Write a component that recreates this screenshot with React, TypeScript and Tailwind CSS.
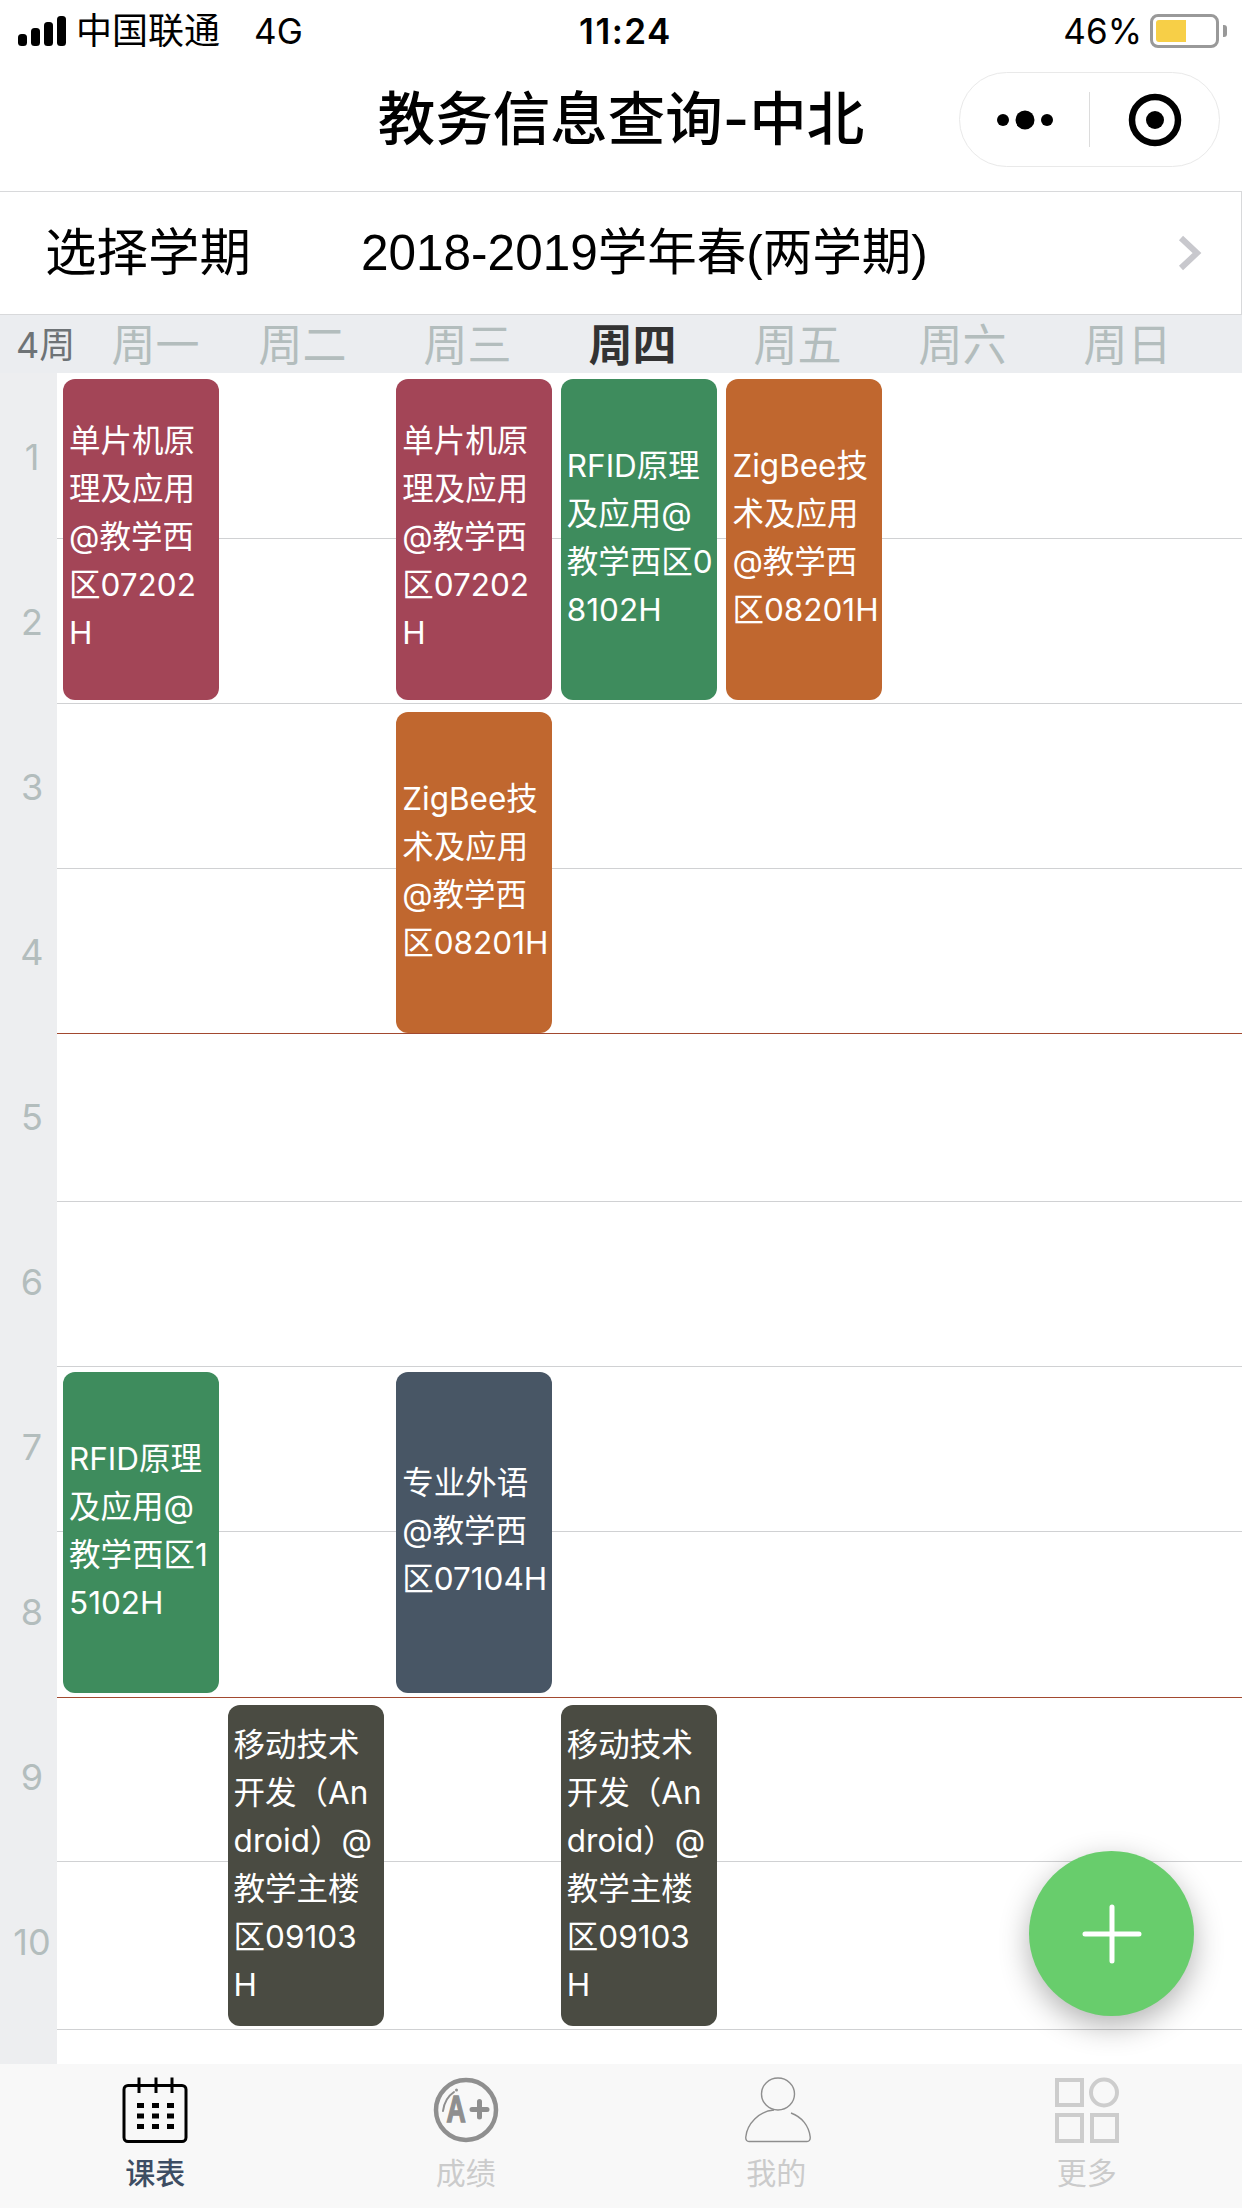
const tracks = [
  { n: 1, line: 'row-start-1 border-[#d0d1d3]' },
  { n: 2, line: 'row-start-2 border-[#d0d1d3]' },
  { n: 3, line: 'row-start-3 border-[#d0d1d3]' },
  { n: 4, line: 'row-start-4 border-[#a2492f]' },
  { n: 5, line: 'row-start-5 border-[#d0d1d3]' },
  { n: 6, line: 'row-start-6 border-[#d0d1d3]' },
  { n: 7, line: 'row-start-7 border-[#d0d1d3]' },
  { n: 8, line: 'row-start-8 border-[#a2492f]' },
  { n: 9, line: 'row-start-9 border-[#d0d1d3]' },
  { n: 10, line: 'row-start-10 border-[#d0d1d3]' },
]

const maroon = 'bg-[#a34557]'
const orange = 'bg-[#c0672f]'
const green = 'bg-[#3e8c5d]'
const slate = 'bg-[#485665]'
const dark = 'bg-[#4a4b42]'

const courses = [
  { place: 'col-start-1 row-start-1 mt-[6px] ml-[6px] pb-[5px]', color: maroon, lines: ['单片机原', '理及应用', '@教学西', '区07202', 'H'] },
  { place: 'col-start-3 row-start-1 mt-[6px] ml-[8px] pb-[5px]', color: maroon, lines: ['单片机原', '理及应用', '@教学西', '区07202', 'H'] },
  { place: 'col-start-4 row-start-1 mt-[6px] ml-[7px] pb-[4px]', color: green, lines: ['RFID原理', '及应用@', '教学西区0', '8102H'] },
  { place: 'col-start-5 row-start-1 mt-[6px] ml-[7px] pb-[4px]', color: orange, lines: ['ZigBee技', '术及应用', '@教学西', '区08201H'] },
  { place: 'col-start-3 row-start-3 mt-[9px] ml-[8px] pb-[4px]', color: orange, lines: ['ZigBee技', '术及应用', '@教学西', '区08201H'] },
  { place: 'col-start-1 row-start-7 mt-[6px] ml-[6px] pb-[4px]', color: green, lines: ['RFID原理', '及应用@', '教学西区1', '5102H'] },
  { place: 'col-start-3 row-start-7 mt-[6px] ml-[8px] pb-[4px]', color: slate, lines: ['专业外语', '@教学西', '区07104H'] },
  { place: 'col-start-2 row-start-9 mt-[8px] ml-[5px] pb-[2px]', color: dark, lines: ['移动技术', '开发（An', 'droid）@', '教学主楼', '区09103', 'H'] },
  { place: 'col-start-4 row-start-9 mt-[8px] ml-[7px] pb-[2px]', color: dark, lines: ['移动技术', '开发（An', 'droid）@', '教学主楼', '区09103', 'H'] },
]

const days = [
  { label: '周二', active: false },
  { label: '周三', active: false },
  { label: '周四', active: true },
  { label: '周五', active: false },
  { label: '周六', active: false },
  { label: '周日', active: false },
]

function StatusBar() {
  return (
    <div className="h-[60px] grid grid-cols-3 items-center pl-[18px] pr-[15px] pt-[2px] text-black">
      <div className="flex items-center">
        <svg width="48" height="30" viewBox="0 0 48 30" fill="#000">
          <rect x="0" y="18" width="9" height="12" rx="3.5" />
          <rect x="13" y="12" width="9" height="18" rx="3.5" />
          <rect x="26" y="6" width="9" height="24" rx="3.5" />
          <rect x="39" y="0" width="9" height="30" rx="3.5" />
        </svg>
        <span className="ml-[10px] text-[36px] leading-none">中国联通</span>
        <span className="ml-[34px] text-[35px] leading-none">4G</span>
      </div>
      <div className="text-center text-[35px] font-semibold tracking-[1.5px] leading-none pl-[6px]">11:24</div>
      <div className="flex items-center justify-end">
        <span className="text-[35px] leading-none mr-[8px]">46%</span>
        <div className="w-[69px] h-[34px] border-[3px] border-[#999999] rounded-[8px] p-[3px]">
          <div className="w-[30px] h-[22px] bg-[#f7cf47] rounded-l-[3px]" />
        </div>
        <div className="w-[4px] h-[12px] bg-[#999999] rounded-r-[3px] ml-[4px]" />
      </div>
    </div>
  )
}

function NavBar() {
  return (
    <div className="h-[132px] grid grid-cols-[1fr_auto_1fr] items-center pb-[12px] border-b border-[#d8d9db]">
      <div />
      <div className="text-[57.5px] font-medium leading-none text-black">教务信息查询-中北</div>
      <div className="flex justify-end pr-[22px]">
        <div className="w-[261px] h-[95px] rounded-full border border-[#e9e9e9] flex items-center">
          <div className="w-[129px] flex justify-center">
            <svg width="60" height="24" viewBox="0 0 60 24" fill="#000">
              <circle cx="8" cy="12" r="6" />
              <circle cx="30" cy="12" r="9.5" />
              <circle cx="52" cy="12" r="6" />
            </svg>
          </div>
          <div className="w-px h-[55px] bg-[#dcdcdc]" />
          <div className="flex-1 flex justify-center">
            <svg width="54" height="54" viewBox="0 0 54 54">
              <circle cx="27" cy="27" r="23" fill="none" stroke="#000" strokeWidth="6.5" />
              <circle cx="27" cy="27" r="9" fill="#000" />
            </svg>
          </div>
        </div>
      </div>
    </div>
  )
}

function TermPicker() {
  return (
    <div className="h-[123px] flex items-center pl-[45px] border-b border-r border-[#d8d9db] text-black">
      <span className="w-[316px] text-[51.5px] leading-none">选择学期</span>
      <span className="text-[49.5px] leading-none font-['Liberation_Sans','Noto_Sans_CJK_SC',sans-serif]">2018-2019学年春(两学期)</span>
      <svg className="ml-auto mr-[39px]" width="24" height="36" viewBox="0 0 24 36" fill="none">
        <path d="M3 3 L19 18 L3 33" stroke="#c8c8cd" strokeWidth="6" />
      </svg>
    </div>
  )
}

function WeekHeader() {
  return (
    <div className="h-[58px] flex items-center pt-[1px] bg-[#ebedf0] text-[44px] leading-none text-[#b3bdbd]">
      <span className="w-[57px] pl-[16px] text-[36px] whitespace-nowrap text-[#6e7376]">4周</span>
      <span className="w-[163px] text-center pl-[34px]">周一</span>
      {days.map((d) => (
        <span key={d.label} className={d.active ? 'w-[165px] text-center font-bold text-[#333333]' : 'w-[165px] text-center'}>
          {d.label}
        </span>
      ))}
    </div>
  )
}

function Timetable() {
  return (
    <div className="h-[1691px] flex overflow-hidden">
      <div className="w-[57px] shrink-0 bg-[#edeef0] grid content-start pt-[1px] grid-rows-[repeat(10,165px)]">
        {tracks.map((t) => (
          <div key={t.n} className="flex items-center justify-center pl-[7px] text-[36px] leading-none text-[#b3bdbd]">
            {t.n}
          </div>
        ))}
      </div>
      <div className="flex-1 grid content-start grid-cols-[repeat(7,165.6px)_1fr] grid-rows-[165px_165px_165px_165px_168px_165px_165px_166px_164px_168px]">
        {tracks.map((t) => (
          <div key={t.n} className={`col-span-full border-b mb-[-1px] ${t.line}`} />
        ))}
        {courses.map((c, i) => (
          <div
            key={i}
            className={`${c.place} ${c.color} row-span-2 self-start w-[156px] h-[321px] rounded-[12px] flex flex-col justify-center pl-[6px] text-[31.5px] leading-[48px] text-white whitespace-nowrap`}
          >
            {c.lines.map((l, j) => (
              <div key={j}>{l}</div>
            ))}
          </div>
        ))}
      </div>
    </div>
  )
}

function CalendarIcon() {
  return (
    <svg width="66" height="66" viewBox="0 0 66 66" fill="none">
      <rect x="2" y="8.5" width="62" height="56" rx="4" stroke="#000" strokeWidth="3" />
      <path d="M17 0.5V16M34 0.5V16M50 0.5V16" stroke="#000" strokeWidth="3" />
      <g fill="#000">
        <rect x="15" y="26" width="7" height="5" />
        <rect x="30" y="26" width="7" height="5" />
        <rect x="45" y="26" width="7" height="5" />
        <rect x="15" y="36.5" width="7" height="5" />
        <rect x="30" y="36.5" width="7" height="5" />
        <rect x="45" y="36.5" width="7" height="5" />
        <rect x="15" y="47" width="7" height="5" />
        <rect x="30" y="47" width="7" height="5" />
        <rect x="45" y="47" width="7" height="5" />
      </g>
    </svg>
  )
}

function GradeIcon() {
  return (
    <svg width="66" height="66" viewBox="0 0 66 66" fill="none">
      <circle cx="33" cy="33" r="30" stroke="#8f8f8f" strokeWidth="4.5" />
      <path d="M10 34 C11 26 15 19 21 15" stroke="#8f8f8f" strokeWidth="2" strokeLinecap="round" />
      <circle cx="23.5" cy="13" r="1.5" fill="#8f8f8f" />
      <text transform="translate(23 45) scale(0.72 1)" textAnchor="middle" fontFamily="Liberation Sans" fontWeight="700" fontSize="37" fill="#8f8f8f" stroke="#8f8f8f" strokeWidth="1.5">A</text>
      <path d="M46.5 24.5V40M39 32.5H54" stroke="#8f8f8f" strokeWidth="5" strokeLinecap="round" />
    </svg>
  )
}

function PersonIcon() {
  return (
    <svg className="ml-[4px]" width="66" height="66" viewBox="0 0 66 66" fill="none">
      <ellipse cx="33" cy="17" rx="16.5" ry="16" stroke="#8e8e8e" strokeWidth="1.4" />
      <path d="M29 33 C14 34 2 47 0.8 60 C0.5 63 2 64.5 4 64.5 H62 C64 64.5 65.5 63 65.2 60 C64 49 57 40 46 36" stroke="#8e8e8e" strokeWidth="1.4" />
    </svg>
  )
}

function MoreIcon() {
  return (
    <svg width="64" height="66" viewBox="0 0 64 66" fill="none" stroke="#cdcdcd" strokeWidth="4">
      <rect x="2" y="3" width="25" height="25" />
      <ellipse cx="49" cy="15.5" rx="13" ry="13" />
      <rect x="2" y="38" width="25" height="26" />
      <rect x="37" y="38" width="25" height="26" />
    </svg>
  )
}

function TabBar() {
  const tabs = [
    { label: '课表', icon: <CalendarIcon />, cls: 'text-[#3d4d63] font-medium' },
    { label: '成绩', icon: <GradeIcon />, cls: 'text-[#cbcbcb]' },
    { label: '我的', icon: <PersonIcon />, cls: 'text-[#cbcbcb]' },
    { label: '更多', icon: <MoreIcon />, cls: 'text-[#cbcbcb]' },
  ]
  return (
    <div className="h-[144px] bg-[#f8f8f8] grid grid-cols-4">
      {tabs.map((t) => (
        <div key={t.label} className="flex flex-col items-center pt-[13px]">
          {t.icon}
          <span className={`mt-[13px] text-[30px] leading-[34px] ${t.cls}`}>{t.label}</span>
        </div>
      ))}
    </div>
  )
}

export default function App() {
  return (
    <div className="relative w-[1242px] h-[2208px] overflow-hidden bg-white font-['Inter','Noto_Sans_CJK_SC',sans-serif]">
      <StatusBar />
      <NavBar />
      <TermPicker />
      <WeekHeader />
      <Timetable />
      <TabBar />
      <button className="absolute left-[1029px] top-[1851px] w-[165px] h-[165px] rounded-full bg-[#68cd6c] shadow-[0_10px_30px_rgba(0,0,0,0.3)] flex items-center justify-center">
        <svg width="60" height="60" viewBox="0 0 60 60" stroke="#fff" strokeWidth="5" strokeLinecap="round">
          <path d="M30 3V57M3 30H57" />
        </svg>
      </button>
    </div>
  )
}
